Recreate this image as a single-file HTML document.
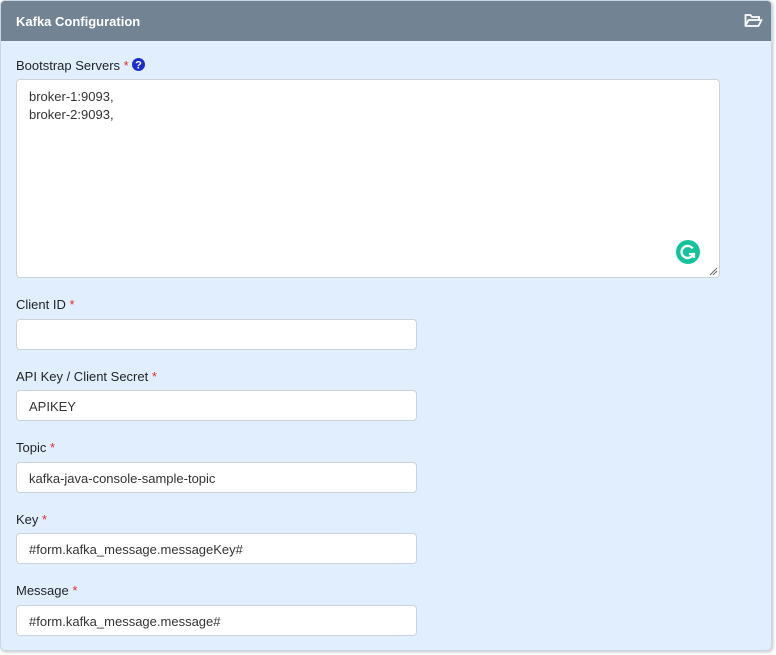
<!DOCTYPE html>
<html><head><style>
body{margin:0;background:#fff;font-family:"Liberation Sans",sans-serif;width:776px;height:655px;overflow:hidden;position:relative}
.panel{position:absolute;left:0;top:0;width:772px;height:651px;background:#e1eefd;border-radius:5px;box-shadow:1px 1px 3px rgba(0,0,0,.25);border:1px solid #c9d6e4;box-sizing:border-box;overflow:hidden}
.hd{height:40px;background:#728393;color:#fff;font-weight:bold;font-size:13px;line-height:41px;padding-left:15px}
.lbl{position:absolute;left:16px;font-size:13px;color:#212529}
.req{color:#e03030}
.inp{position:absolute;left:16px;width:401px;height:31px;background:#fff;border:1px solid #ccd2d8;border-radius:4px;box-sizing:border-box;font-size:13px;color:#333;line-height:32px;padding-left:12px}
.ta{position:absolute;left:16px;top:79px;width:704px;height:199px;background:#fff;border:1px solid #ccd2d8;border-radius:4px;box-sizing:border-box;font-size:13px;color:#333;padding:8px 12px;line-height:18px}
</style></head><body>
<div class="panel">
<div class="hd">Kafka Configuration</div>
<svg style="position:absolute;left:743px;top:12px" width="19" height="15" viewBox="0 0 19 15"><path d="M1.5 13V2h5l1.5 2h7v3" fill="none" stroke="#fff" stroke-width="1.8"/><path d="M1.5 13l3-6h13l-3 6z" fill="none" stroke="#fff" stroke-width="1.8" stroke-linejoin="round"/></svg>
</div>
<div class="lbl" style="top:58px">Bootstrap Servers <span class="req">*</span> <svg width="13" height="13" viewBox="0 0 13 13" style="vertical-align:-1px"><circle cx="6.5" cy="6.5" r="6.5" fill="#1a2ecf"/><text x="6.5" y="10.5" font-size="11" font-weight="bold" text-anchor="middle" fill="#fff" font-family="Liberation Sans">?</text></svg></div>
<div class="ta">broker-1:9093,<br>broker-2:9093,
<svg style="position:absolute;left:659px;top:160px" width="24" height="24" viewBox="0 0 24 24"><circle cx="12" cy="12" r="12" fill="#15c39a"/><path d="M16.5 8.5A6 6 0 1 0 17.5 13" fill="none" stroke="#fff" stroke-width="2.4"/><path d="M13 14h5v4" fill="none" stroke="#fff" stroke-width="2.2"/></svg>
<svg style="position:absolute;right:1px;bottom:1px" width="9" height="9"><path d="M1 8L8 1M4 8L8 4" stroke="#666" stroke-width="1"/></svg>
</div>
<div class="lbl" style="top:297px">Client ID <span class="req">*</span></div>
<div class="inp" style="top:319px"></div>
<div class="lbl" style="top:369px">API Key / Client Secret <span class="req">*</span></div>
<div class="inp" style="top:390px">APIKEY</div>
<div class="lbl" style="top:440px">Topic <span class="req">*</span></div>
<div class="inp" style="top:462px">kafka-java-console-sample-topic</div>
<div class="lbl" style="top:512px">Key <span class="req">*</span></div>
<div class="inp" style="top:533px">#form.kafka_message.messageKey#</div>
<div class="lbl" style="top:583px">Message <span class="req">*</span></div>
<div class="inp" style="top:605px">#form.kafka_message.message#</div>
</body></html>
